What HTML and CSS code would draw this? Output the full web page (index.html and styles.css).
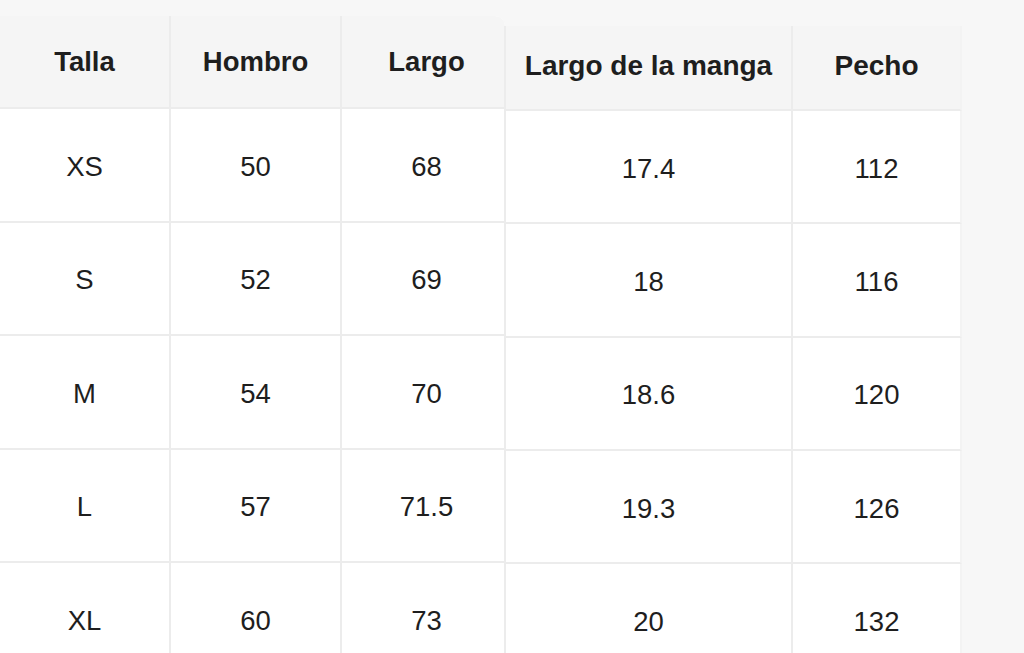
FILE: index.html
```html
<!DOCTYPE html>
<html lang="es">
<head>
<meta charset="utf-8">
<title>Tabla de tallas</title>
<link rel="stylesheet" href="styles.css">
</head>
<body>
<div class="sheet">
  <div class="panel panel-left">
    <div class="cell head">Talla</div>
    <div class="cell head">Hombro</div>
    <div class="cell head last">Largo</div>
    <div class="cell">XS</div><div class="cell">50</div><div class="cell last">68</div>
    <div class="cell">S</div><div class="cell">52</div><div class="cell last">69</div>
    <div class="cell">M</div><div class="cell">54</div><div class="cell last">70</div>
    <div class="cell">L</div><div class="cell">57</div><div class="cell last">71.5</div>
    <div class="cell">XL</div><div class="cell">60</div><div class="cell last">73</div>
  </div>
  <div class="panel panel-right">
    <div class="cell head">Largo de la manga</div>
    <div class="cell head last">Pecho</div>
    <div class="cell">17.4</div><div class="cell last">112</div>
    <div class="cell">18</div><div class="cell last">116</div>
    <div class="cell">18.6</div><div class="cell last">120</div>
    <div class="cell">19.3</div><div class="cell last">126</div>
    <div class="cell">20</div><div class="cell last">132</div>
  </div>
</div>
</body>
</html>
```

FILE: styles.css
```css
html, body {
  margin: 0;
  padding: 0;
  background: #f7f7f7;
  height: 100%;
  overflow: hidden;
}

.sheet {
  display: flex;
  align-items: flex-start;
  font-family: "Liberation Sans", Arial, Helvetica, sans-serif;
  color: #1e1e1e;
}

.panel {
  display: grid;
  background: #ffffff;
}

.panel-left {
  margin-top: 16px;
  width: 505px;
  grid-template-columns: 171px 171px 163px;
  grid-template-rows: 93px repeat(5, 113.5px);
  border-top-right-radius: 10px;
}

.panel-right {
  margin-top: 26px;
  width: 456px;
  grid-template-columns: 287px 169px;
  grid-template-rows: 85px repeat(5, 113.3px);
  border-left: 2px solid #ececec;
  margin-left: -1px;
}

.cell {
  display: flex;
  align-items: center;
  justify-content: center;
  font-size: 27.5px;
  padding-top: 4px;
  border-right: 2px solid #ececec;
  border-bottom: 2px solid #ececec;
  box-sizing: border-box;
  background: #ffffff;
}

.cell.last {
  border-right: none;
}

.panel-left .cell.last {
  padding-left: 6px;
}

.panel-right .cell.last {
  border-right: 2px solid #f3f3f3;
}

.head {
  background: #f5f5f5;
  font-weight: bold;
  padding-top: 0;
  padding-bottom: 0;
}

.panel-left .head.last {
  border-top-right-radius: 10px;
}

.panel-right .head {
  font-size: 28px;
  padding-bottom: 4px;
}
```
